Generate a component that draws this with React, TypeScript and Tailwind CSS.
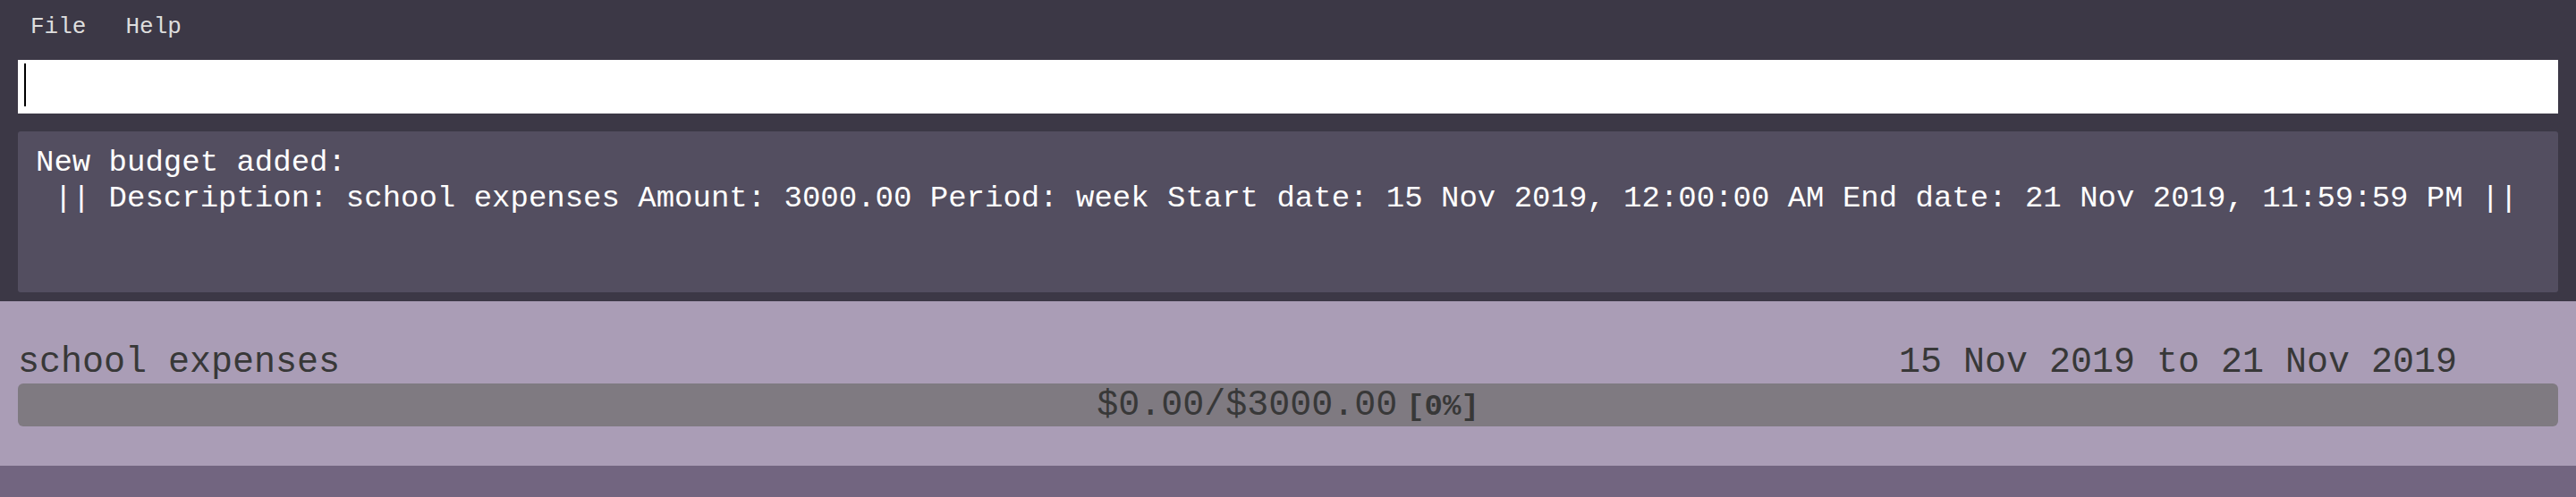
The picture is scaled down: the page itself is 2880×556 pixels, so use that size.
import React from 'react'

const mono = "font-['Liberation_Mono',monospace]"

const MenuBar = () => {
  return (
    <div className={`flex h-[56px] items-start pl-[12px] pt-[17px] text-[26px] leading-[26px] text-[#dedede] ${mono}`}>
      <span className="px-[22px]">File</span>
      <span className="px-[22px]">Help</span>
    </div>
  )
}

const CommandBox = () => {
  return (
    <div className="px-[20px] pt-[11px]">
      <div className="flex h-[60px] items-start bg-white pl-[7px] pt-[4px]">
        <div className="h-[48px] w-[2px] bg-black" />
      </div>
    </div>
  )
}

const ResultDisplay = () => {
  return (
    <div className="px-[20px] pt-[20px] pb-[10px]">
      <div className={`h-[180px] rounded-[3px] bg-[#534e60] pl-[20px] pt-[15px] text-[34px] leading-[40px] text-white whitespace-pre ${mono}`}>
        <p>New budget added:</p>
        <p> || Description: school expenses Amount: 3000.00 Period: week Start date: 15 Nov 2019, 12:00:00 AM End date: 21 Nov 2019, 11:59:59 PM ||</p>
      </div>
    </div>
  )
}

const BudgetPanel = () => {
  return (
    <div className={`bg-[#aa9db6] px-[20px] pt-[46px] pb-[44px] text-[#383838] ${mono}`}>
      <div className="flex justify-between pr-[113px] text-[40px] leading-[46px] whitespace-pre">
        <span>school expenses</span>
        <span>15 Nov 2019 to 21 Nov 2019</span>
      </div>
      <div className="flex h-[48px] items-center justify-center rounded-[6px] bg-[#7f7a81]">
        <div className="flex items-baseline gap-[10px] pt-[3px]">
          <span className="text-[40px] leading-[40px]">$0.00/$3000.00</span>
          <span className="text-[34px] font-bold leading-[40px]">[0%]</span>
        </div>
      </div>
    </div>
  )
}

export default function App() {
  return (
    <div className="flex h-[556px] w-full flex-col bg-[#3c3846]">
      <MenuBar />
      <CommandBox />
      <ResultDisplay />
      <BudgetPanel />
      <div className="flex-1 bg-[#726580]" />
    </div>
  )
}
